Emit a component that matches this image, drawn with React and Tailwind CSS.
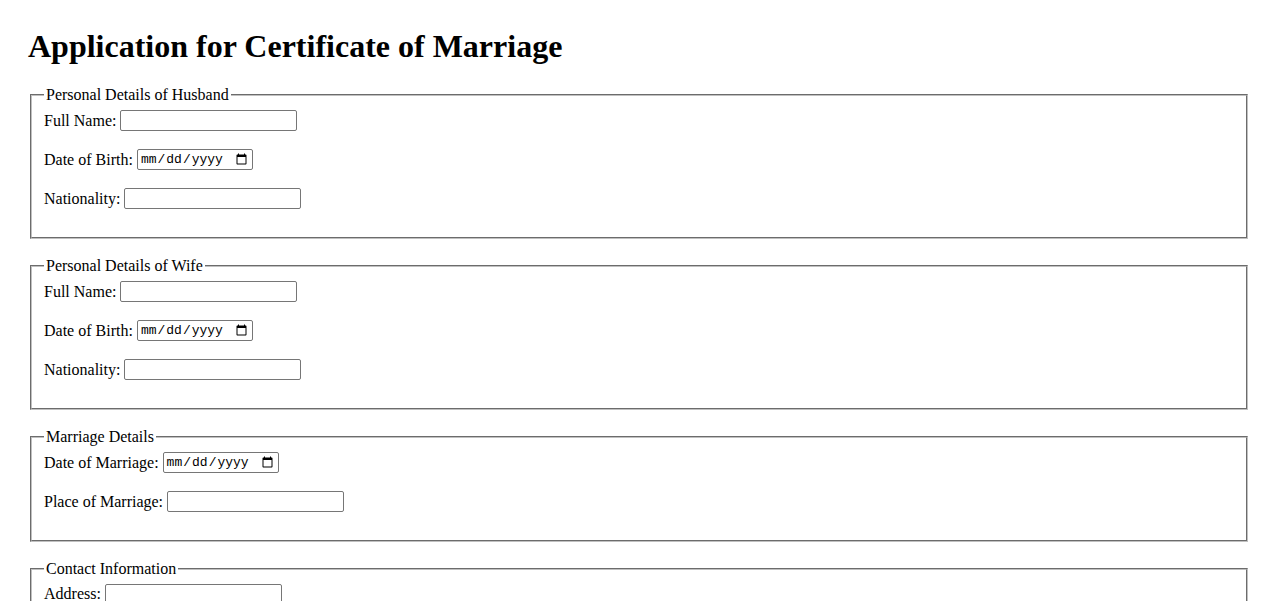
import React from "react";

function Row({ label, type = "text" }) {
  const isDate = type === "date";
  return (
    <div className="flex items-center h-[21px] mb-[18px]">
      <label className="whitespace-pre">{label} </label>
      <input
        type={type}
        className={
          isDate
            ? "w-[116px] h-[21px] border border-[#767676] rounded-[2px] px-[2px] bg-white text-[13px] font-['Liberation_Mono',monospace] text-black"
            : "w-[177px] h-[21px] border border-[#767676] rounded-[2px] px-[2px] bg-white text-[13px] font-['Liberation_Sans',sans-serif]"
        }
      />
    </div>
  );
}

function Group({ legend, children }) {
  return (
    <fieldset className="mx-[2px] mb-[18.4px] pt-[5.6px] px-3 pb-[10px] [border:2px_groove_rgb(192,192,192)] min-w-0">
      <legend className="px-[2px]">{legend}</legend>
      {children}
    </fieldset>
  );
}

export default function App() {
  return (
    <div className="bg-white min-h-screen p-[28px] font-['Liberation_Serif',serif] text-[16px] leading-[normal] text-black">
      <h1 className="text-[32px] font-bold mb-[21.44px]">Application for Certificate of Marriage</h1>
      <form>
        <Group legend="Personal Details of Husband">
          <Row label="Full Name:" />
          <Row label="Date of Birth:" type="date" />
          <Row label="Nationality:" />
        </Group>
        <Group legend="Personal Details of Wife">
          <Row label="Full Name:" />
          <Row label="Date of Birth:" type="date" />
          <Row label="Nationality:" />
        </Group>
        <Group legend="Marriage Details">
          <Row label="Date of Marriage:" type="date" />
          <Row label="Place of Marriage:" />
        </Group>
        <Group legend="Contact Information">
          <Row label="Address:" />
          <Row label="Phone Number:" type="tel" />
          <Row label="Email:" type="email" />
        </Group>
      </form>
    </div>
  );
}
